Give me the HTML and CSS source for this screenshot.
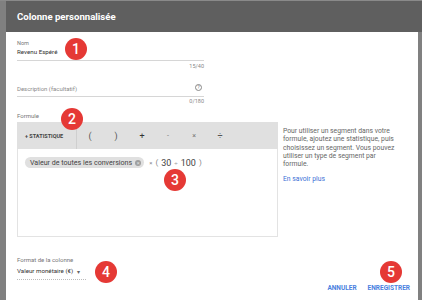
FILE: index.html
```html
<!DOCTYPE html>
<html lang="fr">
  <head>
    <meta charset="UTF-8" />
    <meta name="viewport" content="width=device-width, initial-scale=1.0" />
    <title>Colonne personnalisée</title>
    <link rel="stylesheet" href="styles.css">
  </head>
  <body>
    <div class="screen">
      <div class="dialog">
        <!-- Title bar -->
        <header class="dialog-header">Colonne personnalisée</header>
        <div class="dialog-body">
          <div class="field">
            <div class="field-label">Nom</div>
            <div class="field-input">Revenu Espéré</div>
            <div class="counter">15/40</div>
          </div>
          <div class="field field-desc">
            <div class="field-input placeholder">
              <span>Description (facultatif)</span>
              <span class="help-icon">?</span>
            </div>
            <div class="counter">0/180</div>
          </div>
          <!-- Formula editor -->
          <div class="field-label formula-label">Formule</div>
          <div class="formula-row">
            <div class="formula-box">
              <div class="toolbar">
                <div class="tool tool-metric">+ STATISTIQUE</div>
                <div class="tool">(</div>
                <div class="tool">)</div>
                <div class="tool tool-strong">+</div>
                <div class="tool tool-light">-</div>
                <div class="tool tool-light">×</div>
                <div class="tool">÷</div>
              </div>
              <div class="formula">
                <span class="chip">Valeur de toutes les conversions <span class="chip-x">×</span></span>
                <span class="op">×</span>
                <span class="paren">(</span>
                <span class="num">30</span>
                <span class="op">÷</span>
                <span class="num">100</span>
                <span class="paren">)</span>
              </div>
            </div>
            <div class="formula-help">
              <p>Pour utiliser un segment dans votre formule, ajoutez une statistique, puis choisissez un segment. Vous pouvez utiliser un type de segment par formule.</p>
              <a href="#" class="link">En savoir plus</a>
            </div>
          </div>
          <!-- Column format -->
          <div class="field-label format-label">Format de la colonne</div>
          <div class="select">Valeur monétaire (€) <span class="caret">▾</span></div>
          <div class="actions">
            <a href="#" class="btn">ANNULER</a>
            <a href="#" class="btn">ENREGISTRER</a>
          </div>
        </div>
      </div>
      <!-- Step markers -->
      <span class="badge" style="left:65px;top:37px;">1</span>
      <span class="badge" style="left:61px;top:107px;">2</span>
      <span class="badge" style="left:164px;top:168px;">3</span>
      <span class="badge" style="left:95px;top:260px;">4</span>
      <span class="badge" style="left:380px;top:260px;">5</span>
    </div>
  </body>
</html>
```

FILE: styles.css
```css
body {
  font-family: Roboto, "Liberation Sans", sans-serif;
  margin: 0;
  padding: 0;
  background-color: #808080;
  color: #333;
}
.screen {
  position: relative;
  width: 422px;
  height: 300px;
  overflow: hidden;
  padding-left: 6px;
  padding-right: 4px;
  box-sizing: border-box;
  border-top: 1px solid #8a8a8a;
}
.dialog {
  background-color: #fff;
  height: 299px;
}
/* Header */
.dialog-header {
  background-color: #5f5f5f;
  color: #fff;
  font-size: 9.6px;
  font-weight: 700;
  height: 31px;
  line-height: 31px;
  padding-left: 11px;
  margin-right: -4px;
}
.dialog-body {
  padding: 7px 0 0 11px;
}
/* Text fields */
.field {
  width: 187px;
}
.field-label {
  font-size: 5.5px;
  line-height: 8px;
  color: #777;
}
.field-input {
  margin-top: 1px;
  font-size: 6.2px;
  line-height: 9px;
  padding-bottom: 3px;
  border-bottom: 1px solid #d6d6d6;
  color: #333;
  display: flex;
  justify-content: space-between;
  align-items: center;
}
.field-input.placeholder {
  color: #8a8a8a;
  font-size: 6px;
  padding-bottom: 2px;
}
.help-icon {
  width: 5px;
  height: 5px;
  border: 1px solid #888;
  border-radius: 50%;
  font-size: 4.5px;
  line-height: 5px;
  text-align: center;
  color: #777;
  margin-right: 2px;
  margin-bottom: 3px;
}
.counter {
  margin-top: 1.5px;
  font-size: 5.5px;
  line-height: 7px;
  text-align: right;
  color: #888;
}
.field-desc {
  margin-top: 14px;
}
.formula-label {
  margin-top: 7px;
  font-size: 6px;
}
/* Formula editor */
.formula-row {
  display: flex;
  gap: 5px;
  margin-top: 2px;
}
.formula-box {
  width: 261px;
  height: 115px;
  border: 1px solid #e3e3e3;
  box-sizing: border-box;
}
.toolbar {
  display: flex;
  background-color: #e0e0e0;
  height: 27px;
  margin: -1px -1px 0 -1px;
}
.tool {
  width: 26px;
  display: flex;
  align-items: center;
  justify-content: center;
  font-size: 9px;
  color: #555;
}
.tool-metric {
  width: 60px;
  font-size: 5.5px;
  font-weight: 700;
  color: #444;
  border-right: 1px solid #cfcfcf;
  justify-content: flex-start;
  padding-left: 8px;
  box-sizing: border-box;
}
.tool-strong {
  color: #333;
}
.tool-light {
  font-size: 7px;
  color: #777;
}
.formula {
  display: flex;
  align-items: center;
  gap: 3px;
  padding: 8px 0 0 7px;
}
.chip {
  display: inline-flex;
  align-items: center;
  gap: 3px;
  height: 11px;
  padding: 0 3px 0 5px;
  background-color: #e0e0e0;
  border-radius: 6px;
  font-size: 7.1px;
  color: #444;
  margin-right: 2px;
}
.chip-x {
  width: 6px;
  height: 6px;
  border-radius: 50%;
  background-color: #9e9e9e;
  color: #e0e0e0;
  font-size: 5.5px;
  line-height: 6px;
  text-align: center;
}
.op {
  font-size: 6px;
  color: #888;
}
.paren {
  font-size: 8px;
  color: #888;
}
.num {
  font-size: 9px;
  color: #444;
}
.formula-help {
  width: 118px;
  padding-top: 5px;
}
.formula-help p {
  margin: 0;
  font-size: 6.8px;
  line-height: 8.3px;
  color: #666;
}
.link {
  display: block;
  margin-top: 6.5px;
  font-size: 6.8px;
  line-height: 8.3px;
  color: #3b6fd6;
  text-decoration: none;
}
/* Column format */
.format-label {
  margin-top: 19px;
  font-size: 6px;
}
.select {
  display: flex;
  align-items: center;
  width: max-content;
  white-space: nowrap;
  margin-top: 2.5px;
  padding-right: 6px;
  font-size: 6.2px;
  line-height: 9px;
  padding-bottom: 3px;
  border-bottom: 1px dotted #bbb;
  color: #333;
}
.caret {
  font-size: 6px;
  color: #666;
  margin-left: 4px;
}
.actions {
  display: flex;
  justify-content: flex-end;
  gap: 11px;
  margin-top: 4px;
  padding-right: 8px;
}
.btn {
  font-size: 6.5px;
  line-height: 8px;
  font-weight: 700;
  color: #4a7fe0;
  text-decoration: none;
}
/* Red step markers */
.badge {
  position: absolute;
  width: 22px;
  height: 22px;
  border-radius: 50%;
  background-color: #e53935;
  color: #fff;
  font-size: 14px;
  font-weight: 500;
  line-height: 22px;
  text-align: center;
}
```
